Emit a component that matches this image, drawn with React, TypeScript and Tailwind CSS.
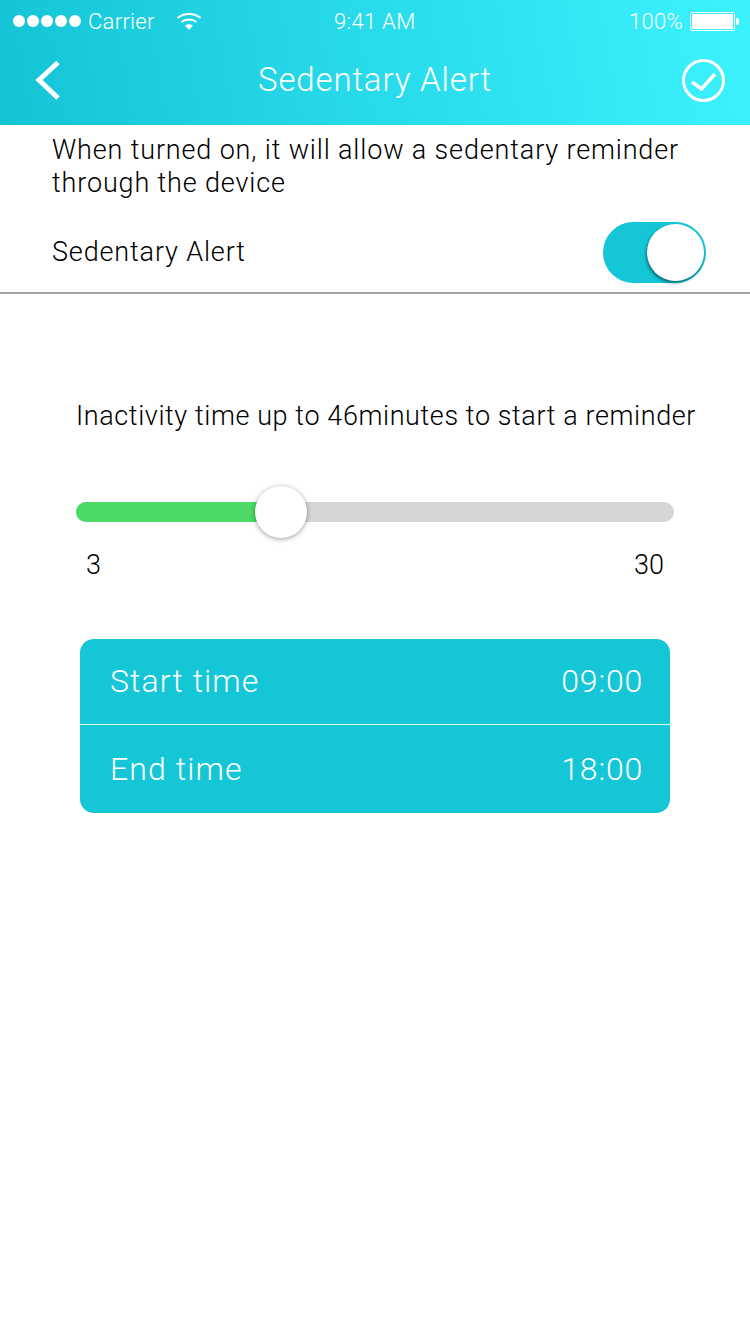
const font = "font-['Roboto','Liberation_Sans',sans-serif]";

function WifiIcon() {
  return (
    <svg width="26" height="20" viewBox="0 0 26 20" fill="none" className="ml-[21px]">
      <path d="M1.5 7 C7.5 1.6 18.5 1.6 24.5 7" stroke="white" strokeWidth="2" />
      <path d="M5.5 11 C9.5 7.6 16.5 7.6 20.5 11" stroke="white" strokeWidth="2" />
      <path d="M9 14.6 C11.5 12.8 14.5 12.8 17 14.6 L13 19 Z" fill="white" />
    </svg>
  );
}

function StatusBar() {
  return (
    <div className="relative flex h-[42px] items-center justify-between pl-[13px] pr-[11px] text-[22px] font-light tracking-[0.3px] text-white">
      <div className="flex items-center">
        <div className="flex gap-[2px]">
          {[0, 1, 2, 3, 4].map((i) => (
            <span key={i} className="h-[12px] w-[12px] rounded-full bg-white" />
          ))}
        </div>
        <span className="ml-[7px]">Carrier</span>
        <WifiIcon />
      </div>
      <span className="absolute left-[334px] top-[5px]">9:41 AM</span>
      <div className="flex items-center">
        <span>100%</span>
        <div className="ml-[7px] h-[19px] w-[45px] rounded-[2px] border border-white p-[1px]">
          <div className="h-full w-full rounded-[1px] bg-white" />
        </div>
        <div className="ml-[1px] h-[7px] w-[3px] rounded-r-[2px] bg-white" />
      </div>
    </div>
  );
}

function NavBar() {
  return (
    <div className="flex h-[83px] items-start justify-between pl-[34px] pr-[25px]">
      <svg width="28" height="42" viewBox="0 0 28 42" fill="none" className="mt-[18px]">
        <path d="M24 2.5 L5 20 L24 38" stroke="white" strokeWidth="5" />
      </svg>
      <span className="ml-[6px] mt-[17px] text-[33px] leading-[42px] font-light tracking-[0.85px] text-white">Sedentary Alert</span>
      <svg width="43" height="43" viewBox="0 0 43 43" fill="none" className="mt-[17px]">
        <circle cx="21.5" cy="21.5" r="20" stroke="white" strokeWidth="3" />
        <path d="M10 23 L19.5 30 L33 15" stroke="white" strokeWidth="3.5" />
      </svg>
    </div>
  );
}

function TimeRow({ label, value, className }: { label: string; value: string; className: string }) {
  return (
    <div className={`flex items-center justify-between pl-[30px] pr-[27px] text-[32px] font-light tracking-[1.1px] text-white ${className}`}>
      <span>{label}</span>
      <span className="tracking-[0.8px]">{value}</span>
    </div>
  );
}

export default function App() {
  return (
    <div className={`min-h-[1334px] w-[750px] bg-white text-black ${font}`}>
      <header className="h-[125px] bg-[linear-gradient(80deg,#14c4d6,#3df2ff)]">
        <StatusBar />
        <NavBar />
      </header>

      <section className="h-[169px] border-b-2 border-[#a2a2a2] pl-[52px] pr-[44px] pt-[9px]">
        <p className="text-[27px] leading-[33px] font-light tracking-[0.85px]">
          When turned on, it will allow a sedentary reminder through the device
        </p>
        <div className="mt-[22px] flex items-center justify-between">
          <span className="text-[27px] font-light tracking-[0.85px]">Sedentary Alert</span>
          <div className="flex h-[61px] w-[103px] items-center justify-end rounded-full bg-[#14c6d6] pr-[2px]">
            <div className="h-[57px] w-[57px] rounded-full bg-white shadow-[-1px_2px_3px_rgba(0,70,80,0.7)]" />
          </div>
        </div>
      </section>

      <section className="px-[76px] pt-[106px]">
        <p className="text-[27px] leading-[33px] font-light tracking-[0.6px] whitespace-nowrap">
          Inactivity time up to 46minutes to start a reminder
        </p>
        <div className="relative mt-[69px] h-[20px] rounded-full bg-[#d6d6d6]">
          <div className="h-full w-[200px] rounded-l-full bg-[#4cd964]" />
          <div className="absolute left-[179px] top-[-16px] h-[52px] w-[52px] rounded-full bg-white shadow-[0_1px_5px_rgba(0,0,0,0.4)]" />
        </div>
        <div className="mt-[27px] flex justify-between px-[10px] text-[27px] leading-[33px] font-light">
          <span>3</span>
          <span>30</span>
        </div>
      </section>

      <section className="mx-[80px] mt-[57px] flex h-[174px] flex-col rounded-[14px] bg-[#14c6d6]">
        <TimeRow label="Start time" value="09:00" className="h-[85px] pb-[2px]" />
        <div className="h-[1px] bg-white/90" />
        <TimeRow label="End time" value="18:00" className="flex-1" />
      </section>
    </div>
  );
}
